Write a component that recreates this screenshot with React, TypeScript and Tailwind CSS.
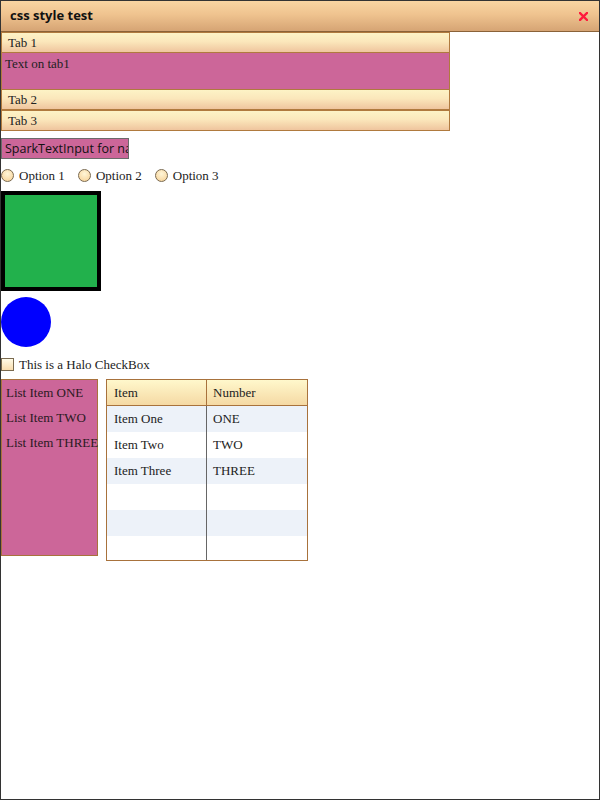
const serif = { fontFamily: '"Liberation Serif", "Times New Roman", serif' };

const TabHeader = ({ label }: { label: string }) => (
  <div className="h-[21px] border border-[#b07a3e] bg-[linear-gradient(#fdf3c6_0%,#fbe7bb_45%,#efc59e_100%)] pl-[6px] text-[13px] leading-[20px] text-[#222]">
    {label}
  </div>
);

const Radio = ({ label }: { label: string }) => (
  <label className="flex items-center gap-[5px]">
    <span className="h-[13px] w-[13px] rounded-full border border-[#7a6a50] bg-[radial-gradient(circle_at_50%_35%,#fff6d8,#f6cf92)]" />
    <span>{label}</span>
  </label>
);

const rows = [
  ['Item One', 'ONE'],
  ['Item Two', 'TWO'],
  ['Item Three', 'THREE'],
  ['', ''],
  ['', ''],
  ['', ''],
];

export default function App() {
  return (
    <div className="flex h-[800px] w-[600px] flex-col border border-[#333] bg-white" style={serif}>
      {/* Title bar */}
      <div className="flex h-[31px] shrink-0 items-center justify-between border-b border-[#8a6238] bg-[linear-gradient(#f9d5a2_0%,#efc38f_45%,#d6a474_100%)] pl-[9px] pr-[11px]">
        <span className="text-[13px] font-bold text-[#111]" style={{ fontFamily: '"Open Sans", "Noto Sans", sans-serif' }}>
          css style test
        </span>
        <svg width="9" height="9" viewBox="0 0 9 9">
          <path d="M1 1 L8 8 M8 1 L1 8" stroke="#ff1a3c" strokeWidth="2.4" strokeLinecap="square" />
        </svg>
      </div>

      {/* Accordion */}
      <div className="w-[449px]">
        <TabHeader label="Tab 1" />
        <div className="h-[36px] border-x border-[#b07a3e] bg-[#cc6699] pl-[3px] pt-[4px] text-[13px] leading-[14px] text-[#222]">
          Text on tab1
        </div>
        <TabHeader label="Tab 2" />
        <TabHeader label="Tab 3" />
      </div>

      {/* Text input */}
      <div
        className="mt-[7px] h-[21px] w-[128px] overflow-hidden whitespace-nowrap border border-[#6b6b6b] bg-[#cc6699] pl-[3px] text-[12.5px] leading-[19px] text-[#111]"
        style={{ fontFamily: '"Open Sans", "Noto Sans", sans-serif' }}
      >
        SparkTextInput for name
      </div>

      {/* Radios */}
      <div className="mt-[7px] flex items-center gap-[13px] text-[13px] text-[#222]">
        <Radio label="Option 1" />
        <Radio label="Option 2" />
        <Radio label="Option 3" />
      </div>

      {/* Green square */}
      <div className="mt-[5px] h-[100px] w-[100px] border-[4px] border-black bg-[#22b14c]" />

      {/* Blue circle */}
      <div className="mt-[6px] h-[50px] w-[50px] rounded-full bg-[#0000ff]" />

      {/* Checkbox */}
      <label className="mt-[8px] flex items-center gap-[5px] text-[13px] text-[#222]">
        <span className="h-[13px] w-[13px] border border-[#7a6a50] bg-[linear-gradient(#fffbe8,#f8dcae)]" />
        This is a Halo CheckBox
      </label>

      {/* List + grid */}
      <div className="mt-[5px] flex items-start gap-[8px]">
        <div className="flex h-[177px] w-[97px] flex-col gap-[11px] border border-[#a8723c] bg-[#cc6699] pl-[4px] pt-[6px] text-[13px] leading-[14px] text-[#2a1a22]">
          <div>List Item ONE</div>
          <div>List Item TWO</div>
          <div className="whitespace-nowrap">List Item THREE</div>
        </div>
        <div className="w-[202px] border border-[#a8723c] text-[13px] text-[#222]">
          <div className="flex h-[26px] border-b border-[#a8723c] bg-[linear-gradient(#fff8cc,#f5d9a4)] leading-[25px]">
            <div className="w-[100px] border-r border-[#a8723c] pl-[7px]">Item</div>
            <div className="flex-1 pl-[6px]">Number</div>
          </div>
          {rows.map((r, i) => (
            <div key={i} className={`flex leading-[26px] ${i % 2 === 0 ? 'bg-[#edf2f9]' : 'bg-white'} ${i === rows.length - 1 ? 'h-[24px]' : 'h-[26px]'}`}>
              <div className="w-[100px] border-r border-[#666] pl-[7px]">{r[0]}</div>
              <div className="flex-1 pl-[6px]">{r[1]}</div>
            </div>
          ))}
        </div>
      </div>
    </div>
  );
}
